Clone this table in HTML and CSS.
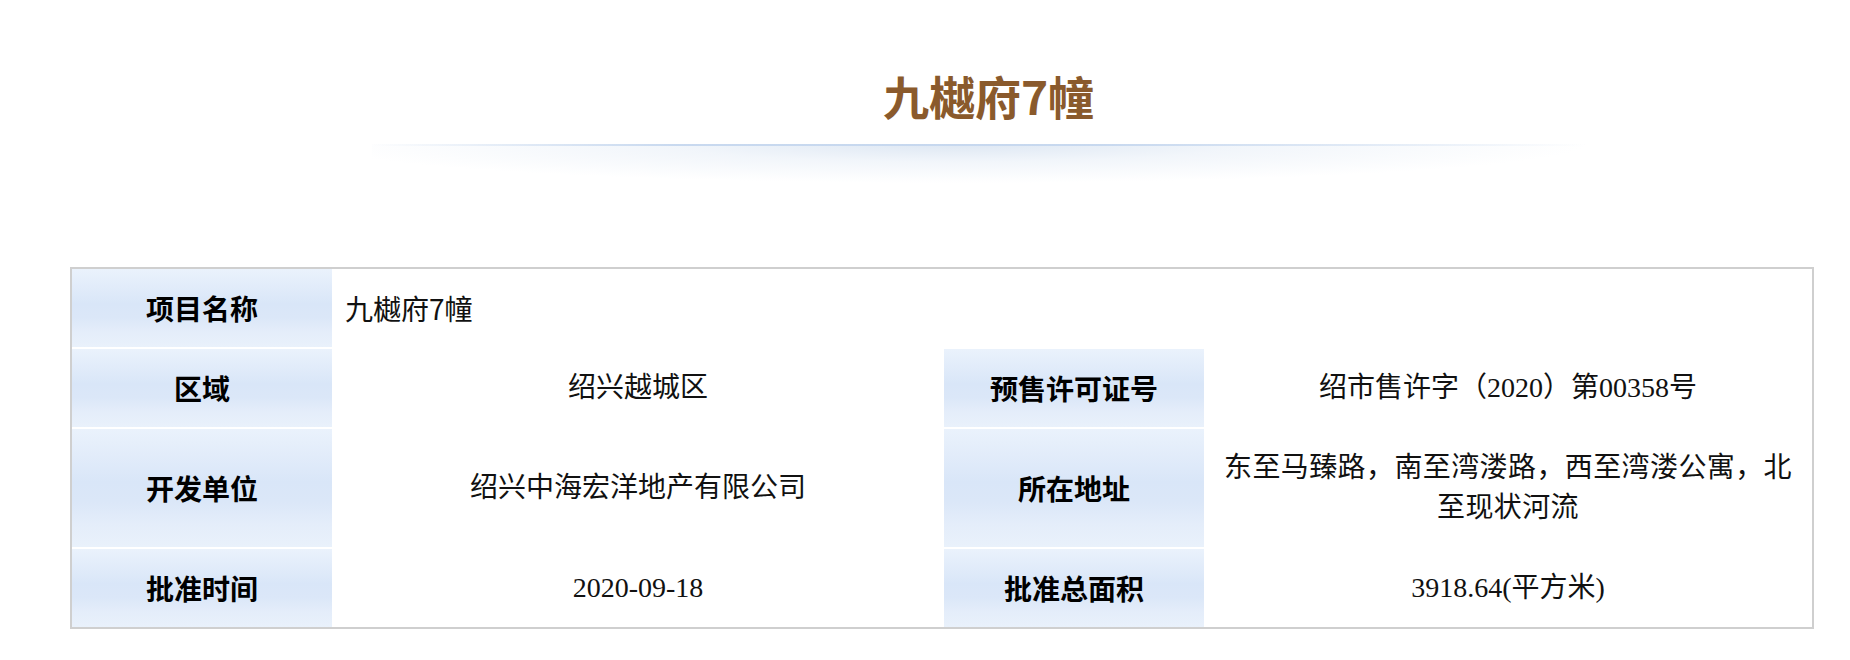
FILE: index.html
```html
<!DOCTYPE html>
<html lang="zh-CN">
<head>
<meta charset="utf-8">
<title>九樾府7幢</title>
<link rel="stylesheet" href="styles.css">
</head>
<body>
<div class="page">
  <header class="head">
    <h1 class="title">九樾府7幢</h1>
    <div class="band"></div>
  </header>
  <table class="info">
    <colgroup>
      <col class="c-label">
      <col class="c-val1">
      <col class="c-label">
      <col class="c-val2">
    </colgroup>
    <tbody>
      <tr>
        <th class="lbl">项目名称</th>
        <td class="val val-left" colspan="3">九樾府7幢</td>
      </tr>
      <tr>
        <th class="lbl">区域</th>
        <td class="val">绍兴越城区</td>
        <th class="lbl">预售许可证号</th>
        <td class="val">绍市售许字（2020）第00358号</td>
      </tr>
      <tr>
        <th class="lbl">开发单位</th>
        <td class="val">绍兴中海宏洋地产有限公司</td>
        <th class="lbl">所在地址</th>
        <td class="val val-addr">东至马臻路，南至湾溇路，西至湾溇公寓，北至现状河流</td>
      </tr>
      <tr class="last">
        <th class="lbl">批准时间</th>
        <td class="val">2020-09-18</td>
        <th class="lbl">批准总面积</th>
        <td class="val">3918.64(平方米)</td>
      </tr>
    </tbody>
  </table>
</div>
</body>
</html>
```

FILE: styles.css
```css
html, body {
  margin: 0;
  padding: 0;
  background: #ffffff;
}

.page {
  padding-top: 65px;
  font-family: "Liberation Serif", "Noto Sans CJK SC", serif;
  color: #000;
}

.head {
  width: 1215px;
  margin-left: 372px;
}

.title {
  margin: 0;
  padding-left: 18px;
  text-align: center;
  font-family: "Noto Sans CJK SC", sans-serif;
  font-weight: 700;
  font-size: 46px;
  line-height: 60px;
  color: #8a5a2c;
}

.band {
  margin-top: 19px;
  height: 39px;
  background: radial-gradient(ellipse 52% 100% at 48% 0%, rgba(210, 223, 239, 0.75) 0%, rgba(225, 234, 245, 0.45) 45%, rgba(255, 255, 255, 0) 100%);
}

.band::before {
  content: "";
  display: block;
  height: 2px;
  margin-top: 2px;
  background: linear-gradient(to right, rgba(210, 224, 242, 0) 0%, rgba(196, 214, 238, 0.9) 25%, rgba(196, 214, 238, 0.9) 60%, rgba(210, 224, 242, 0) 100%);
}

.info {
  margin-top: 84px;
  margin-left: 70px;
  width: 1744px;
  table-layout: fixed;
  border: 2px solid #cfcfcf;
  border-collapse: separate;
  border-spacing: 0;
}

.c-label { width: 260px; }
.c-val1 { width: 612px; }
.c-val2 { width: 608px; }

.lbl,
.val {
  padding: 19px 0;
  line-height: 40px;
  font-size: 28px;
  text-align: center;
  vertical-align: middle;
  border-bottom: 2px solid #ffffff;
}

.last .lbl,
.last .val {
  border-bottom: 0;
}

.lbl {
  font-family: "Noto Sans CJK SC", sans-serif;
  font-weight: 700;
  color: #000;
  background: linear-gradient(to bottom, #eaf2fc 0%, #e2ecfa 22%, #d9e6f8 45%, #dbe7f8 62%, #e4edfa 80%, #e9f1fb 100%);
}

.val {
  font-weight: 400;
  color: #111;
  background: #ffffff;
  padding-left: 12px;
  padding-right: 12px;
}

.val-addr {
  letter-spacing: 0.4px;
  padding-left: 16px;
  padding-right: 16px;
}

.val-left {
  text-align: left;
  padding-left: 13px;
  font-family: "Noto Sans CJK SC", sans-serif;
}
```
